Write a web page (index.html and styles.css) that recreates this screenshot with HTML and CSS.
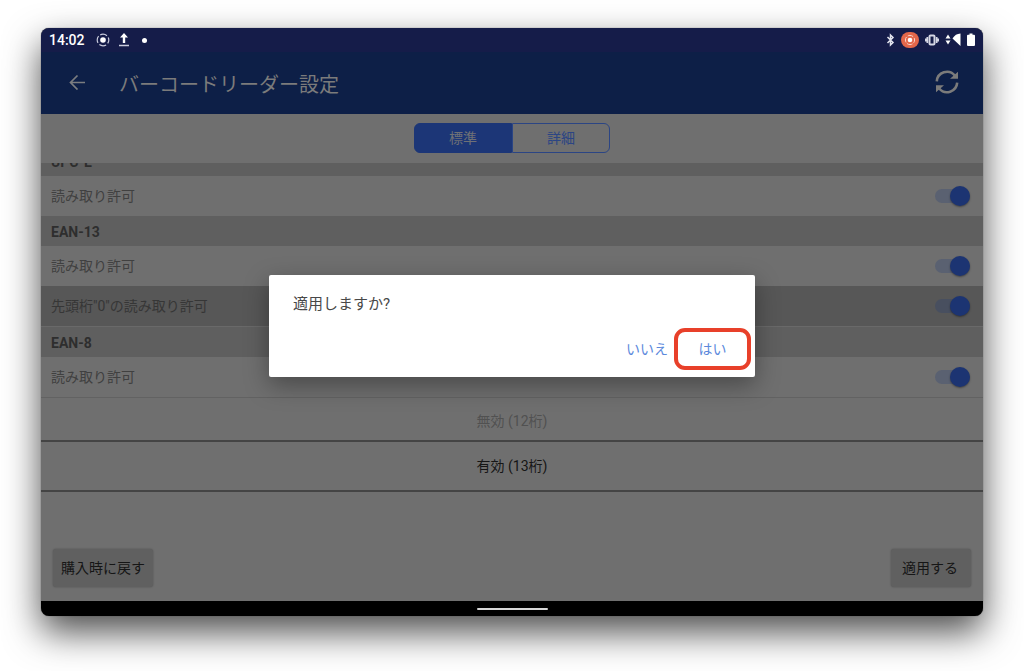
FILE: index.html
```html
<!DOCTYPE html>
<html lang="ja">
<head>
    <meta charset="UTF-8">
    <meta name="viewport" content="width=device-width, initial-scale=1.0">
    <title>バーコードリーダー設定</title>
    <link rel="stylesheet" href="styles.css">
</head>
<body>
    <div class="device">
        <div class="status-bar">
            <span class="clock">14:02</span>
            <svg class="status-target" width="14" height="14" viewBox="0 0 14 14" fill="none" stroke="#c9cbdc">
                <circle cx="7" cy="7" r="5.8" stroke-width="1.2" stroke-dasharray="7.1 2" stroke-dashoffset="3.5"/>
                <circle cx="7" cy="7" r="2.8" fill="#fff" stroke="none"/>
            </svg>
            <svg class="status-upload" width="12" height="14" viewBox="0 0 12 14" fill="#fff">
                <path d="M6 0L10 4.5H7.2V10H4.8V4.5H2z"/>
                <path d="M1 11.8h10v1.4H1z" fill="#c9cbdc"/>
            </svg>
            <span class="dot"></span>
            <div class="status-icons">
                <svg width="9" height="14" viewBox="0 0 9 14" fill="none" stroke="#e3e4ee" stroke-width="1.5">
                    <path d="M1.500 4l5.500 5.500L4.500 12V2L7 4.500L1.500 10"/>
                </svg>
                <svg width="18" height="16" viewBox="0 0 18 16" fill="none" stroke="#fff">
                    <rect width="18" height="16" rx="8" fill="#e3674a" stroke="none"/>
                    <circle cx="9" cy="8" r="4.6" stroke="#f8d4ca" stroke-dasharray="5.7 1.5" stroke-dashoffset="2.8"/>
                    <circle cx="9" cy="8" r="2.3" fill="#fff" stroke="none"/>
                </svg>
                <svg width="14" height="12" viewBox="0 0 14 12" fill="none" stroke="#d5d6e4">
                    <rect x="4.500" y="1.500" width="5" height="9" rx="1" stroke-width="2"/>
                    <path d="M2.300 3v6M11.700 3v6M.7 4.500v3M13.300 4.500v3" stroke-width="1.700"/>
                </svg>
                <svg width="16" height="14" viewBox="0 0 16 14" fill="#fff">
                    <path d="M3 1.500l2.500 4H.5zM3 11.500l-2.500-4h5zM15.500 .5v12.500L7.500 5.500C9.500 2.300 12 .7 15.500 .5z"/>
                </svg>
                <svg width="8" height="14" viewBox="0 0 8 14" fill="#fff">
                    <path d="M2.500 .5h3v1.300H7q1 0 1 1V12q0 1-1 1H1q-1 0-1-1V2.800q0-1 1-1h1.500z"/>
                </svg>
            </div>
        </div>

        <header class="app-bar">
            <button class="icon-button" type="button" aria-label="戻る">
                <svg width="16" height="16" viewBox="0 0 16 16" fill="none" stroke="#7b7d80" stroke-width="1.700">
                    <path d="M16 8.500H1.500M8.500 1.500L1.500 8.500L8.500 15.500"/>
                </svg>
            </button>
            <h1>バーコードリーダー設定</h1>
            <button class="icon-button" type="button" aria-label="更新">
                <svg width="26" height="26" viewBox="0 0 26 26" fill="none" stroke="#7b7b7b" stroke-width="2.600">
                    <path d="M2.800 12.300A10.200 10.200 0 0 1 20.800 6.500M23.200 13.700A10.200 10.200 0 0 1 5.200 19.500"/>
                    <path d="M24 2.800V9.800h-8zM2 23.200V16.200h8z" fill="#7b7b7b" stroke="none"/>
                </svg>
            </button>
        </header>

        <nav class="tabs">
            <button class="tab active" type="button">標準</button>
            <button class="tab" type="button">詳細</button>
        </nav>

        <main class="settings">
            <!-- scrolled to the end of the list -->
            <div class="list">
                <h2>UPC-E</h2>
                <label class="row">読み取り許可<input class="switch" type="checkbox" checked></label>
                <h2>EAN-13</h2>
                <label class="row">読み取り許可<input class="switch" type="checkbox" checked></label>
                <label class="row sub">先頭桁"0"の読み取り許可<input class="switch" type="checkbox" checked></label>
                <h2>EAN-8</h2>
                <label class="row">読み取り許可<input class="switch" type="checkbox" checked></label>
            </div>
            <div class="picker">
                <div class="option">無効 (12桁)</div>
                <div class="option selected">有効 (13桁)</div>
            </div>
        </main>

        <footer class="actions">
            <button type="button">購入時に戻す</button>
            <button type="button">適用する</button>
        </footer>

        <div class="nav-bar"><span class="handle"></span></div>

        <div class="overlay">
            <div class="dialog" role="dialog" aria-labelledby="dialogText">
                <p id="dialogText">適用しますか?</p>
                <div class="dialog-buttons">
                    <button type="button">いいえ</button>
                    <button class="marked" type="button">はい</button>
                </div>
            </div>
        </div>
    </div>
</body>
</html>
```
FILE: styles.css
```css
* {
    box-sizing: border-box;
}

body {
    margin: 0;
    padding: 28px 41px 55px;
    min-height: 100vh;
    display: flex;
    background-color: #fff;
    font-family: Roboto, "Noto Sans CJK JP", sans-serif;
    font-size: 14px;
}

button {
    font: inherit;
    border: none;
    padding: 0;
    background: none;
    cursor: pointer;
}

svg {
    display: block;
}

.device {
    position: relative;
    flex: 1;
    display: flex;
    flex-direction: column;
    border-radius: 8px;
    overflow: hidden;
    background-color: #6f6f6f;
    box-shadow: 0 0 1px #333, 0 16px 36px rgba(0, 0, 0, 0.7);
}

/* status bar */

.status-bar {
    display: flex;
    align-items: center;
    height: 24px;
    padding: 0 8px;
    background-color: #151c49;
    color: #fff;
}

.clock {
    font-weight: 500;
}

.status-target {
    margin-left: 11px;
}

.status-upload {
    margin-left: 8px;
}

.dot {
    width: 5px;
    height: 5px;
    margin-left: 12px;
    border-radius: 50%;
    background-color: #fff;
}

.status-icons {
    display: flex;
    align-items: center;
    gap: 6px;
    margin-left: auto;
}

/* header */

.app-bar {
    display: flex;
    align-items: center;
    height: 62px;
    padding: 0 16px;
    background-color: #0d1f47;
    color: #7b7b7b;
}

.icon-button {
    display: flex;
    justify-content: center;
    align-items: center;
    width: 40px;
    height: 40px;
    padding-bottom: 2px;
}

.app-bar h1 {
    flex: 1;
    margin: 0 0 0 22px;
    font-size: 20px;
    font-weight: 400;
}

/* tabs */

.tabs {
    display: flex;
    justify-content: center;
    align-items: center;
    height: 49px;
    padding-bottom: 1px;
}

.tab {
    width: 98px;
    height: 30px;
    padding-bottom: 2px;
    border: 1px solid #2b4584;
    border-radius: 0 6px 6px 0;
    color: #2b4584;
}

.tab.active {
    border-color: #1c3677;
    border-radius: 6px 0 0 6px;
    background-color: #1c3677;
    color: #6f7176;
}

/* list */

.settings {
    flex: 1;
}

.list {
    display: flex;
    flex-direction: column;
    justify-content: flex-end;
    height: 234px;
    overflow: hidden;
}

.list h2 {
    flex: none;
    height: 30px;
    margin: 0;
    padding-left: 10px;
    background-color: #5f5f5f;
    color: #2e2e2e;
    font-size: 14px;
    font-weight: 700;
    line-height: 32px;
}

.row {
    flex: none;
    display: flex;
    justify-content: space-between;
    align-items: center;
    height: 40px;
    padding: 0 13px 0 10px;
    color: #404040;
    line-height: 20px;
}

.row.sub {
    height: 41px;
    border-bottom: 1px solid #696969;
    background-color: #575757;
    color: #363636;
}

.switch {
    appearance: none;
    display: flex;
    justify-content: flex-end;
    align-items: center;
    width: 35px;
    height: 14px;
    margin: 0;
    border-radius: 7px;
    background-color: rgba(28, 54, 119, 0.25);
}

.switch::before {
    content: "";
    width: 20px;
    height: 20px;
    border-radius: 50%;
    background-color: #1c3472;
    box-shadow: 0 1px 2px rgba(0, 0, 0, 0.4);
}

/* value picker */

.picker {
    border-top: 1px solid #626262;
    text-align: center;
}

.option {
    height: 42px;
    line-height: 46px;
    color: #515151;
}

.option.selected {
    height: 52px;
    border-top: 2px solid #444;
    border-bottom: 2px solid #444;
    line-height: 48px;
    color: #161616;
}

/* footer */

.actions {
    display: flex;
    justify-content: space-between;
    padding: 0 12px 14px;
}

.actions button {
    height: 38px;
    padding: 0 8px 2px;
    border-radius: 3px;
    background-color: #606060;
    box-shadow: 0 0 2px rgba(0, 0, 0, 0.3);
    color: #161616;
}

.actions button:last-child {
    padding: 0 13px 2px 11px;
}

.nav-bar {
    display: flex;
    justify-content: center;
    align-items: center;
    height: 15px;
    background-color: #000;
}

.handle {
    width: 71px;
    height: 2px;
    border-radius: 1px;
    background-color: #d8d8d8;
}

/* confirm dialog */

.overlay {
    position: absolute;
    inset: 24px 0 16px;
    display: flex;
    justify-content: center;
    align-items: center;
}

.dialog {
    width: 52%;
    max-width: 486px;
    padding: 16px 4px 7px 24px;
    border-radius: 2px;
    background-color: #fff;
    box-shadow: 0 8px 24px rgba(0, 0, 0, 0.35);
}

.dialog p {
    margin: 0;
    color: #484848;
    font-size: 15px;
    line-height: 26px;
}

.dialog-buttons {
    display: flex;
    justify-content: flex-end;
    align-items: center;
    gap: 6px;
    margin-top: 11px;
    color: #5c89dc;
}

.dialog-buttons button {
    padding-bottom: 2px;
    color: inherit;
}

.dialog-buttons .marked {
    width: 77px;
    height: 42px;
    border: 4px solid #e8402a;
    border-radius: 11px;
}
```
